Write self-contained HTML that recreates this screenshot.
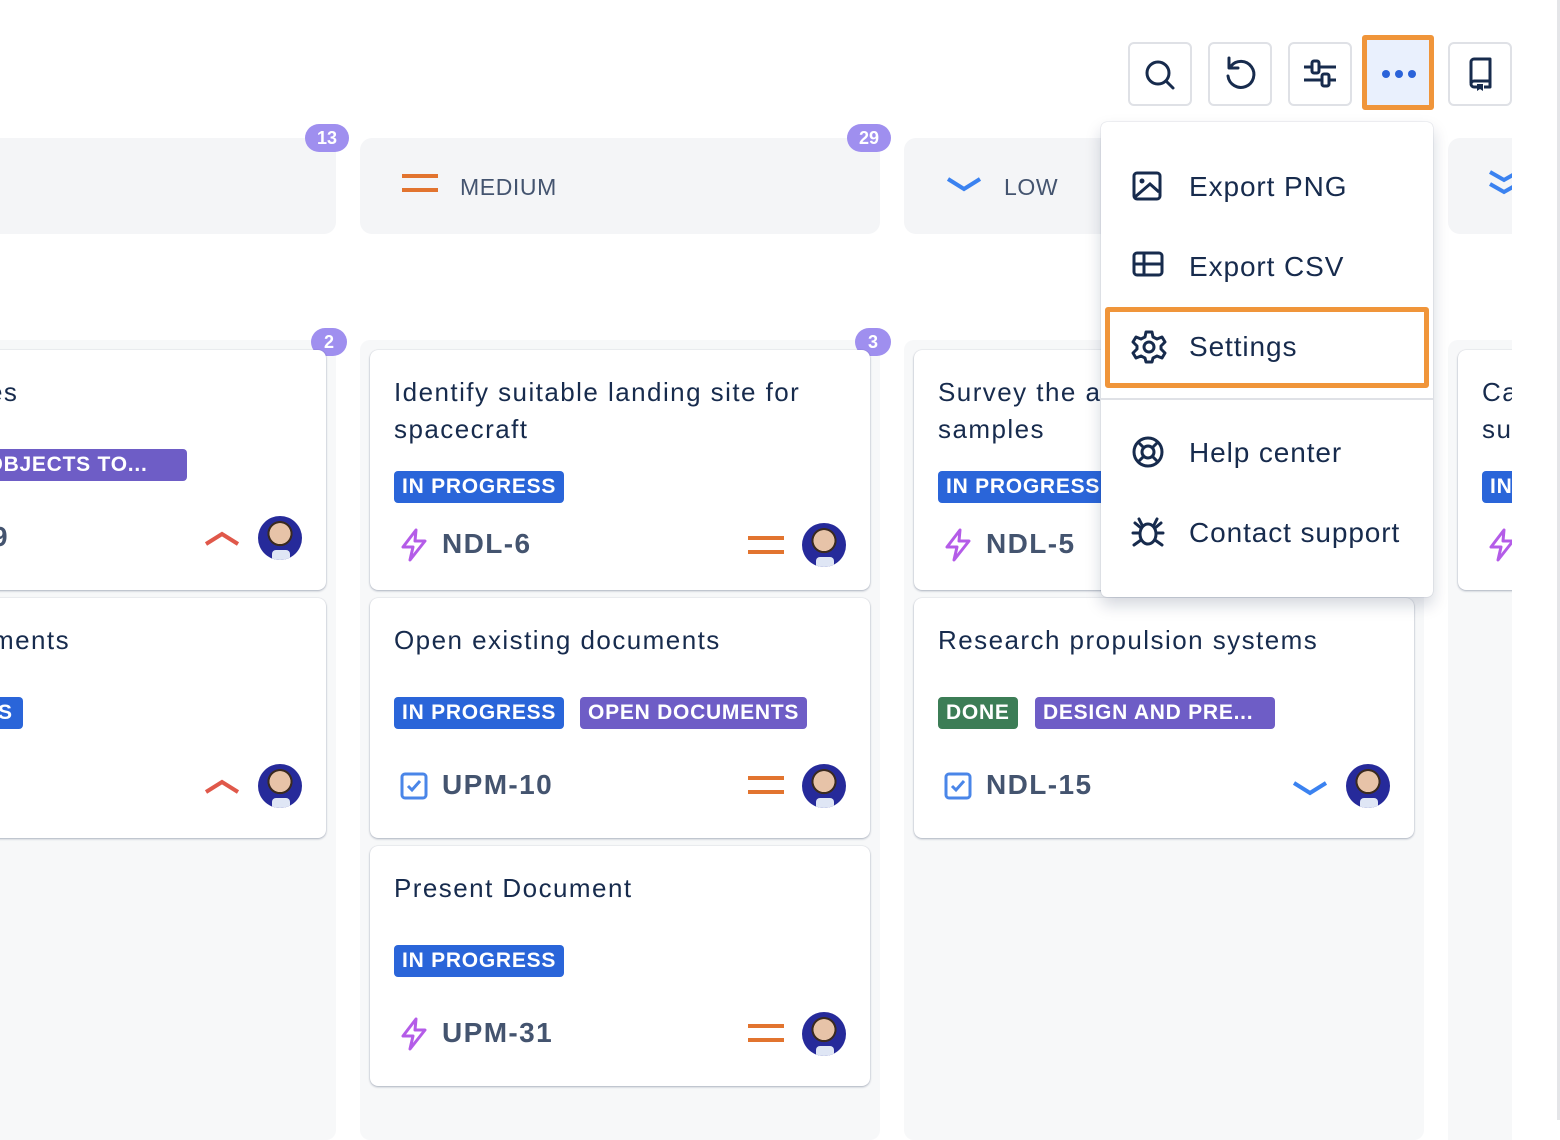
<!DOCTYPE html>
<html><head><meta charset="utf-8"><style>
*{box-sizing:border-box;margin:0;padding:0}
body{width:1560px;height:1120px;overflow:hidden;background:#fff;font-family:"Liberation Sans",Arial,sans-serif;color:#172b4d;position:relative}
.a{position:absolute}
.colbg{position:absolute;background:#f7f8f9;border-radius:10px}
.hdr{position:absolute;background:#f4f5f7;border-radius:12px;height:96px;top:138px}
.hl{position:absolute;top:174px;font-size:23px;color:#44546f;letter-spacing:.6px}
.badge{position:absolute;height:28px;min-width:44px;border-radius:14px;background:#9f8fef;color:#fff;font-weight:bold;font-size:18px;text-align:center;line-height:28px;padding:0 8px}
.card{position:absolute;background:#fff;border-radius:8px;box-shadow:0 1px 2px rgba(9,30,66,.3),0 0 1px rgba(9,30,66,.2);overflow:hidden}
.t{position:absolute;left:24px;font-size:26px;line-height:37px;color:#172b4d;white-space:nowrap;letter-spacing:1.45px}
.tag{position:absolute;height:32px;line-height:32px;border-radius:4px;color:#fff;font-weight:bold;font-size:21px;padding:0 8px;white-space:nowrap;letter-spacing:.75px}
.blue{background:#2a65d9}.purple{background:#6e5dc6}.green{background:#3c7d56}
.key{position:absolute;font-weight:bold;font-size:28px;color:#44546f;white-space:nowrap;letter-spacing:1.4px}
.av{position:absolute;width:44px;height:44px;border-radius:50%;background:radial-gradient(circle at 50% 40%,#e7c3a8 0 30%,#3a2a20 31% 36%,#262a9a 37%);overflow:hidden}
.av:after{content:"";position:absolute;left:14px;top:34px;width:18px;height:12px;background:#dfe6f5;border-radius:4px}
.btn{position:absolute;top:42px;width:64px;height:64px;border:2px solid #dfe1e6;border-radius:6px;background:#fff}
.mi{position:absolute;left:88px;font-size:28px;color:#172b4d;letter-spacing:.9px}
</style></head><body>

<div class="colbg" style="left:-20px;top:340px;width:356px;height:800px"></div>
<div class="colbg" style="left:360px;top:340px;width:520px;height:800px"></div>
<div class="colbg" style="left:904px;top:340px;width:520px;height:800px"></div>
<div class="colbg" style="left:1448px;top:340px;width:64px;height:800px;border-radius:10px 0 0 0"></div>

<div class="hdr" style="left:-20px;width:356px"></div>
<div class="hdr" style="left:360px;width:520px"></div>
<div class="hdr" style="left:904px;width:520px"></div>
<div class="hdr" style="left:1448px;width:64px;border-radius:12px 0 0 12px"></div>
<div class="a" style="left:402px;top:174px;width:36px;height:4px;background:#e2742f"></div>
<div class="a" style="left:402px;top:188px;width:36px;height:4px;background:#e2742f"></div>
<div class="hl" style="left:460px">MEDIUM</div>
<svg class="a" style="left:944px;top:174px" width="40" height="20"><path d="M4 5 L20 15 L36 5" stroke="#3b82f0" stroke-width="4" fill="none"/></svg>
<div class="hl" style="left:1004px">LOW</div>
<svg class="a" style="left:1488px;top:168px" width="24" height="32"><path d="M2 4 L16 12 L30 4 M2 16 L16 24 L30 16" stroke="#3b82f0" stroke-width="4" fill="none"/></svg>
<div class="badge" style="left:305px;top:124px">13</div>
<div class="badge" style="left:847px;top:124px">29</div>
<div class="badge" style="left:311px;top:328px;min-width:36px">2</div>
<div class="badge" style="left:855px;top:328px;min-width:36px">3</div>

<div class="card" style="left:-20px;top:350px;width:346px;height:240px">
 <div class="t" style="top:24px;left:8px">es</div>
 <div class="tag purple" style="left:-20px;top:99px;width:227px;padding-left:4px">D OBJECTS TO...</div>
 <div class="key" style="top:171px;left:12px">9</div>
 <svg class="a" style="left:222px;top:178px" width="40" height="20"><path d="M4 16 L20 6 L36 16" stroke="#e0584a" stroke-width="4" fill="none"/></svg>
 <div class="av" style="left:278px;top:166px"></div>
</div>
<div class="card" style="left:-20px;top:598px;width:346px;height:240px">
 <div class="t" style="top:24px;left:12px">ments</div>
 <div class="tag blue" style="left:10px;top:99px;padding:0 10px 0 8px">S</div>
 <svg class="a" style="left:222px;top:178px" width="40" height="20"><path d="M4 16 L20 6 L36 16" stroke="#e0584a" stroke-width="4" fill="none"/></svg>
 <div class="av" style="left:278px;top:166px"></div>
</div>

<div class="card" style="left:370px;top:350px;width:500px;height:240px">
 <div class="t" style="top:24px">Identify suitable landing site for<br>spacecraft</div>
 <div class="tag blue" style="left:24px;top:121px">IN PROGRESS</div>
 <svg class="a" style="left:28px;top:177px" width="32" height="36"><path d="M18 3 L5 20 H15 L12 33 L27 14 H17 Z" stroke="#b45ce8" stroke-width="3" fill="none" stroke-linejoin="round"/></svg>
 <div class="key" style="left:72px;top:178px">NDL-6</div>
 <div class="a" style="left:378px;top:186px;width:36px;height:4px;background:#e2742f"></div>
 <div class="a" style="left:378px;top:200px;width:36px;height:4px;background:#e2742f"></div>
 <div class="av" style="left:432px;top:173px"></div>
</div>
<div class="card" style="left:370px;top:598px;width:500px;height:240px">
 <div class="t" style="top:24px">Open existing documents</div>
 <div class="tag blue" style="left:24px;top:99px">IN PROGRESS</div>
 <div class="tag purple" style="left:210px;top:99px">OPEN DOCUMENTS</div>
 <svg class="a" style="left:30px;top:174px" width="28" height="28"><rect x="2" y="2" width="24" height="24" rx="3" stroke="#4a86e8" stroke-width="3" fill="none"/><path d="M8 14 L12 18 L20 9" stroke="#4a86e8" stroke-width="3" fill="none"/></svg>
 <div class="key" style="left:72px;top:171px">UPM-10</div>
 <div class="a" style="left:378px;top:178px;width:36px;height:4px;background:#e2742f"></div>
 <div class="a" style="left:378px;top:192px;width:36px;height:4px;background:#e2742f"></div>
 <div class="av" style="left:432px;top:166px"></div>
</div>
<div class="card" style="left:370px;top:846px;width:500px;height:240px">
 <div class="t" style="top:24px">Present Document</div>
 <div class="tag blue" style="left:24px;top:99px">IN PROGRESS</div>
 <svg class="a" style="left:28px;top:170px" width="32" height="36"><path d="M18 3 L5 20 H15 L12 33 L27 14 H17 Z" stroke="#b45ce8" stroke-width="3" fill="none" stroke-linejoin="round"/></svg>
 <div class="key" style="left:72px;top:171px">UPM-31</div>
 <div class="a" style="left:378px;top:178px;width:36px;height:4px;background:#e2742f"></div>
 <div class="a" style="left:378px;top:192px;width:36px;height:4px;background:#e2742f"></div>
 <div class="av" style="left:432px;top:166px"></div>
</div>

<div class="card" style="left:914px;top:350px;width:500px;height:240px">
 <div class="t" style="top:24px">Survey the area for rock<br>samples</div>
 <div class="tag blue" style="left:24px;top:121px">IN PROGRESS</div>
 <svg class="a" style="left:28px;top:177px" width="32" height="36"><path d="M18 3 L5 20 H15 L12 33 L27 14 H17 Z" stroke="#b45ce8" stroke-width="3" fill="none" stroke-linejoin="round"/></svg>
 <div class="key" style="left:72px;top:178px">NDL-5</div>
</div>
<div class="card" style="left:914px;top:598px;width:500px;height:240px">
 <div class="t" style="top:24px">Research propulsion systems</div>
 <div class="tag green" style="left:24px;top:99px">DONE</div>
 <div class="tag purple" style="left:121px;top:99px;width:240px">DESIGN AND PRE...</div>
 <svg class="a" style="left:30px;top:174px" width="28" height="28"><rect x="2" y="2" width="24" height="24" rx="3" stroke="#4a86e8" stroke-width="3" fill="none"/><path d="M8 14 L12 18 L20 9" stroke="#4a86e8" stroke-width="3" fill="none"/></svg>
 <div class="key" style="left:72px;top:171px">NDL-15</div>
 <svg class="a" style="left:376px;top:180px" width="40" height="20"><path d="M4 5 L20 15 L36 5" stroke="#3b82f0" stroke-width="4" fill="none"/></svg>
 <div class="av" style="left:432px;top:166px"></div>
</div>

<div class="card" style="left:1458px;top:350px;width:80px;height:240px;border-radius:8px 0 0 8px">
 <div class="t" style="top:24px">Ca<br>su</div>
 <div class="tag blue" style="left:24px;top:121px">IN</div>
 <svg class="a" style="left:28px;top:177px" width="32" height="36"><path d="M18 3 L5 20 H15 L12 33 L27 14 H17 Z" stroke="#b45ce8" stroke-width="3" fill="none" stroke-linejoin="round"/></svg>
</div>
<div class="a" style="left:1512px;top:0;width:48px;height:1120px;background:#fff"></div>
<div class="a" style="left:1557px;top:0;width:3px;height:1120px;background:#e4e5e8"></div>

<div class="btn" style="left:1128px"><svg width="60" height="60"><circle cx="28" cy="29" r="11" stroke="#172b4d" stroke-width="3" fill="none"/><path d="M36 37 L43 44" stroke="#172b4d" stroke-width="3" stroke-linecap="round"/></svg></div>
<div class="btn" style="left:1208px"><svg width="60" height="60"><path d="M21 22 A13 13 0 1 1 18 32" stroke="#172b4d" stroke-width="3" fill="none" stroke-linecap="round"/><path d="M19 14 L19 24 L28 24" stroke="#172b4d" stroke-width="3" fill="none" stroke-linecap="round" stroke-linejoin="round"/></svg></div>
<div class="btn" style="left:1288px"><svg width="60" height="60"><path d="M14 23 H46 M14 36 H46" stroke="#172b4d" stroke-width="3"/><rect x="22" y="17" width="7" height="12" rx="2" fill="#fff" stroke="#172b4d" stroke-width="3"/><rect x="32" y="30" width="7" height="12" rx="2" fill="#fff" stroke="#172b4d" stroke-width="3"/></svg></div>
<div class="a" style="left:1362px;top:35px;width:72px;height:75px;border:5px solid #f0953a;border-radius:3px;background:#e9f0fd"><svg width="62" height="65"><circle cx="19" cy="34" r="4" fill="#2b63d9"/><circle cx="32" cy="34" r="4" fill="#2b63d9"/><circle cx="45" cy="34" r="4" fill="#2b63d9"/></svg></div>
<div class="btn" style="left:1448px"><svg width="60" height="60"><path d="M21 39 V18 A3 3 0 0 1 24 15 H40 V37 H24 A3 3 0 0 0 21 40 A3 3 0 0 0 24 43 H27 M34 43 H40 V37" stroke="#172b4d" stroke-width="3" fill="none" stroke-linejoin="round"/><path d="M27 40 V47 L30 45 L33 47 V40 Z" fill="#172b4d"/></svg></div>

<div class="a" style="left:1101px;top:122px;width:332px;height:475px;background:#fff;border-radius:6px;box-shadow:0 8px 16px rgba(9,30,66,.18),0 0 1px rgba(9,30,66,.35)">
 <svg class="a" style="left:30px;top:48px" width="34" height="34"><rect x="3" y="3" width="26" height="26" rx="3" stroke="#172b4d" stroke-width="3" fill="none"/><circle cx="11" cy="11" r="2.5" fill="#172b4d"/><path d="M4 27 L19 14 L28 22" stroke="#172b4d" stroke-width="3" fill="none"/></svg>
 <div class="mi" style="top:49px">Export PNG</div>
 <svg class="a" style="left:30px;top:128px" width="36" height="30"><rect x="3" y="3" width="28" height="22" rx="3" stroke="#172b4d" stroke-width="3" fill="none"/><path d="M3 14 H31 M13 3 V25" stroke="#172b4d" stroke-width="3"/></svg>
 <div class="mi" style="top:129px">Export CSV</div>
 <div class="a" style="left:4px;top:185px;width:324px;height:81px;border:5px solid #f0953a;border-radius:3px"></div>
 <svg class="a" style="left:30px;top:207px" width="36" height="36"><path d="M15 3 H21 L22 8 L26 10 L31 8 L34 13 L30 17 V20 L34 24 L31 29 L26 27 L22 29 L21 33 H15 L14 29 L10 27 L5 29 L2 24 L6 20 V17 L2 13 L5 8 L10 10 L14 8 Z" stroke="#172b4d" stroke-width="3" fill="none" stroke-linejoin="round"/><circle cx="18" cy="18" r="5" stroke="#172b4d" stroke-width="3" fill="none"/></svg>
 <div class="mi" style="top:209px">Settings</div>
 <div class="a" style="left:0;top:276px;width:332px;height:2px;background:#dfe1e6"></div>
 <svg class="a" style="left:30px;top:313px" width="36" height="36"><circle cx="17" cy="17" r="14" stroke="#172b4d" stroke-width="3" fill="none"/><circle cx="17" cy="17" r="6" stroke="#172b4d" stroke-width="3" fill="none"/><path d="M7 7 L13 13 M27 7 L21 13 M7 27 L13 21 M27 27 L21 21" stroke="#172b4d" stroke-width="3"/></svg>
 <div class="mi" style="top:315px">Help center</div>
 <svg class="a" style="left:30px;top:393px" width="36" height="36"><ellipse cx="17" cy="19" rx="8" ry="10" stroke="#172b4d" stroke-width="3" fill="none"/><path d="M11 10 L8 4 M23 10 L26 4 M2 18 H9 M25 18 H32 M3 30 L10 25 M31 30 L24 25 M4 8 L10 13 M30 8 L24 13" stroke="#172b4d" stroke-width="3" stroke-linecap="round"/></svg>
 <div class="mi" style="top:395px">Contact support</div>
</div>
</body></html>
